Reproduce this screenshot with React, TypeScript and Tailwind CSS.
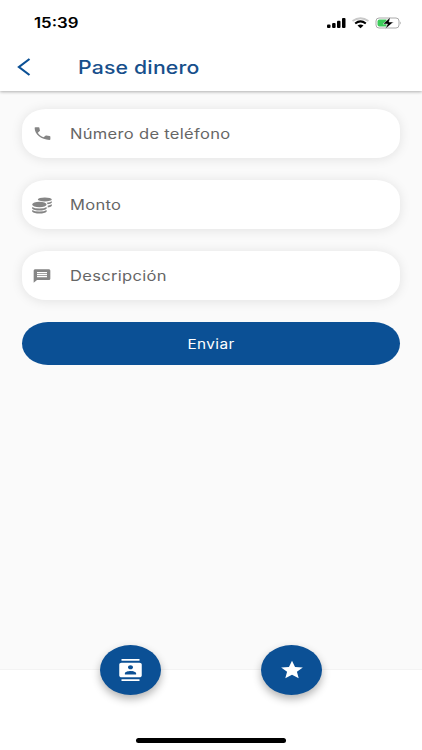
import type { ReactNode } from 'react';

const PHONE =
  'M6.62 10.79c1.44 2.83 3.76 5.14 6.59 6.59l2.2-2.2c.27-.27.67-.36 1.02-.24 1.12.37 2.33.57 3.57.57.55 0 1 .45 1 1V20c0 .55-.45 1-1 1-9.39 0-17-7.61-17-17 0-.55.45-1 1-1h3.5c.55 0 1 .45 1 1 0 1.25.2 2.45.57 3.57.11.35.03.74-.25 1.02l-2.2 2.2z';
const MESSAGE =
  'M20 2H4c-1.1 0-1.99.9-1.99 2L2 22l4-4h14c1.1 0 2-.9 2-2V4c0-1.1-.9-2-2-2zm-2 12H6v-2h12v2zm0-3H6V9h12v2zm0-3H6V6h12v2z';
const CONTACTS =
  'M20 0H4v2h16V0zM4 24h16v-2H4v2zM20 4H4c-1.1 0-2 .9-2 2v12c0 1.1.9 2 2 2h16c1.1 0 2-.9 2-2V6c0-1.1-.9-2-2-2zm-8 2.75c1.24 0 2.25 1.01 2.25 2.25s-1.01 2.25-2.25 2.25S9.75 10.24 9.75 9 10.76 6.75 12 6.75zM17 17H7v-1.5c0-1.67 3.33-2.5 5-2.5s5 .83 5 2.5V17z';
const STAR = 'M12 17.27L18.18 21l-1.64-7.03L22 9.24l-7.19-.61L12 2 9.19 8.63 2 9.24l5.46 4.73L5.82 21z';

function Icon({ d, className }: { d: string; className: string }) {
  return (
    <svg viewBox="0 0 24 24" preserveAspectRatio="none" fill="currentColor" className={className}>
      <path d={d} />
    </svg>
  );
}

function Coins() {
  return (
    <svg viewBox="0 0 20 17" className="mt-px h-[17px] w-5" fill="currentColor">
      <ellipse cx="12.8" cy="2.4" rx="7" ry="2" />
      <ellipse cx="7.4" cy="7.5" rx="7.2" ry="2.8" />
      <path d="M.2 9.9Q2.4 11.5 7.4 11.5T14.6 9.9V11.7Q12.8 13.5 7.4 13.5T.2 11.7Z" />
      <path d="M.2 12.9Q2.4 14.5 7.4 14.5T14.6 12.9V14.7Q12.8 16.5 7.4 16.5T.2 14.7Z" />
      <path d="M14.8 5.7Q18 5.4 19.8 4.2V5.7Q18.6 6.9 15.7 7.200Z" />
      <path d="M15.700 8.700Q18.300 8.300 19.800 7.300V8.900Q18.500 10 15.700 10.400Z" />
    </svg>
  );
}

function Field({ icon, label }: { icon: ReactNode; label: string }) {
  return (
    <div className="flex h-[49px] items-center rounded-[24px/20px] bg-white shadow-[0_1px_12px_rgba(0,0,0,0.1)]">
      <div className="ml-[10px] flex w-5 justify-center text-[#858585]">{icon}</div>
      <span className="ml-[17.6px] origin-left scale-x-[1.18] whitespace-nowrap pt-px text-[14px] leading-5 tracking-[0.26px] text-[#666]">
        {label}
      </span>
    </div>
  );
}

function RoundButton({ children }: { children: ReactNode }) {
  return (
    <button className="flex h-[50px] w-[61px] items-center justify-center rounded-[50%] bg-[#0b5095] text-white shadow-[0_4px_9px_rgba(0,0,0,0.3)]">
      {children}
    </button>
  );
}

function StatusIcons() {
  return (
    <svg viewBox="0 0 78 16" className="mr-[21px] mt-px h-4 w-[78px]">
      <rect x="4" y="9.5" width="3.5" height="3.5" rx="1" />
      <rect x="9.1" y="8" width="3.5" height="5" rx="1" />
      <rect x="14" y="5.7" width="3.5" height="7.3" rx="1" />
      <rect x="19" y="3" width="3.5" height="10" rx="1" />
      <g fill="none" strokeWidth="1.8">
        <path d="M29.5 6Q37.5 .5 45.5 6" stroke="#c9c9c9" />
        <path d="M32.2 8.5Q37.5 4.3 42.8 8.5" stroke="#000" strokeWidth="2.1" />
      </g>
      <path d="M34.5 10.5Q37.5 8.5 40.500 10.500L37.500 13.200Z" />
      <rect x="53" y="3" width="23" height="10" rx="3" fill="white" stroke="#aaa" />
      <path d="M56.500 4.500h7v7h-7q-2 0-2-2v-3q0-2 2-2Z" fill="#3ccb5a" />
      <path d="M77 6.500q1.500 1.500 0 3Z" fill="#aaa" />
      <path d="M67.500 2L60 9h4.500L62 14.300 70.500 7H66Z" stroke="white" strokeWidth="0.500" />
    </svg>
  );
}

export default function App() {
  return (
    <div className="flex h-[750px] w-[422px] flex-col overflow-hidden bg-[#fafafa] font-['Inter','Liberation_Sans',sans-serif]">
      <header className="h-[91px] shrink-0 bg-white shadow-[0_1px_3px_rgba(0,0,0,0.3)]">
        <div className="flex h-11 items-center justify-between">
          <span className="ml-[34px] origin-left scale-x-[1.2] text-[14px] font-semibold">15:39</span>
          <StatusIcons />
        </div>
        <div className="flex h-[46px] items-center">
          <svg viewBox="0 0 14 18" className="ml-[17px] h-[18px] w-[14px]" fill="none" stroke="#0b5095" strokeWidth="2.2">
            <path d="M12.5 1L2 9l10.500 8" />
          </svg>
          <span className="ml-[47px] origin-left scale-x-[1.18] whitespace-nowrap text-[18px] font-medium tracking-[0.15px] text-[#174f8b]">
            Pase dinero
          </span>
        </div>
      </header>

      <main className="flex flex-1 flex-col gap-[22px] px-[22px] pt-[18px]">
        <Field icon={<Icon d={PHONE} className="h-[17px] w-[21px] shrink-0" />} label="Número de teléfono" />
        <Field icon={<Coins />} label="Monto" />
        <Field icon={<Icon d={MESSAGE} className="h-4 w-5" />} label="Descripción" />
        <button className="flex h-[43px] items-center justify-center rounded-[26px/21.5px] bg-[#0b5095] text-white">
          <span className="scale-x-[1.18] pt-[2px] text-[13px] tracking-[0.35px]">Enviar</span>
        </button>
      </main>

      <footer className="flex h-[81px] shrink-0 flex-col items-center justify-between border-t border-[#f3f3f3] bg-white pb-[7px]">
        <div className="-mt-[25px] flex gap-[100px]">
          <RoundButton>
            <Icon d={CONTACTS} className="h-[22px] w-[27px]" />
          </RoundButton>
          <RoundButton>
            <Icon d={STAR} className="h-[22px] w-[26px]" />
          </RoundButton>
        </div>
        <div className="h-[5px] w-[150px] rounded-full bg-black" />
      </footer>
    </div>
  );
}
